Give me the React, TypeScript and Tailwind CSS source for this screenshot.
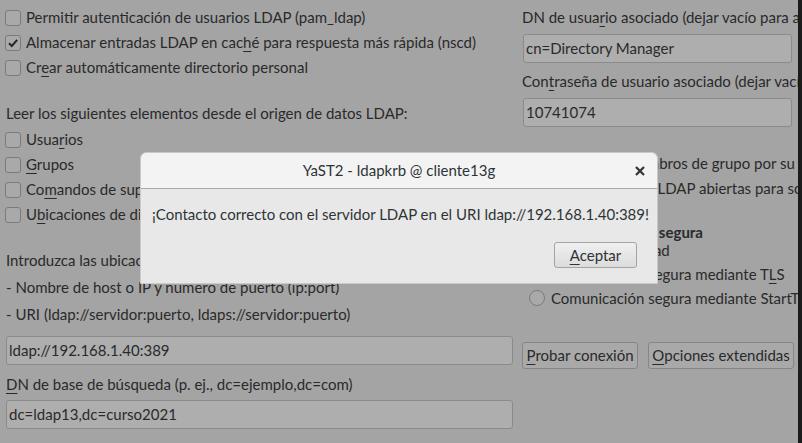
import React from 'react';

const U: React.FC<{ children: React.ReactNode }> = ({ children }) => (
  <span className="underline decoration-1 underline-offset-[3px]">{children}</span>
);

const CheckBox: React.FC<{ checked?: boolean }> = ({ checked }) => (
  <span className="w-[16px] h-[16px] shrink-0 rounded-[3px] border border-[#7b7b7b] bg-[#a9a9a9] flex items-center justify-center">
    {checked && (
      <svg width="12" height="12" viewBox="0 0 12 12">
        <path d="M2 6.2 L4.8 9 L10.2 2.8" fill="none" stroke="#262626" strokeWidth="2" />
      </svg>
    )}
  </span>
);

const Radio = () => (
  <span className="w-[16px] h-[16px] shrink-0 rounded-full border border-[#7b7b7b] bg-[#a9a9a9]" />
);

const CheckRow: React.FC<{ checked?: boolean; children: React.ReactNode; className?: string }> = ({
  checked,
  children,
  className = '',
}) => (
  <div className={`h-[25px] flex items-center gap-[5px] whitespace-nowrap ${className}`}>
    <CheckBox checked={checked} />
    <span>{children}</span>
  </div>
);

const Field: React.FC<{ value: string; className?: string }> = ({ value, className = '' }) => (
  <div
    className={`h-[29px] rounded-[3px] border border-[#8b8b8b] bg-[#aeaeae] flex items-center px-[2px] whitespace-nowrap ${className}`}
  >
    {value}
  </div>
);

const GtkButton: React.FC<{ children: React.ReactNode; className?: string }> = ({ children, className = '' }) => (
  <div
    className={`h-[27px] rounded-[3px] border border-[#868686] bg-[#a9a9a9] flex items-center justify-center px-[4px] whitespace-nowrap ${className}`}
  >
    {children}
  </div>
);

export default function App() {
  return (
    <div className="relative w-[802px] h-[443px] overflow-hidden bg-[#a4a4a4] flex text-[15px] leading-none text-[#2a2a2a] font-['Lato','Noto_Sans',sans-serif]">
      {/* columna izquierda */}
      <div className="w-[522px] shrink-0 pl-[5px] pt-[5px]">
        <CheckRow>Permitir autenticación de usuarios LDAP (pam_ldap)</CheckRow>
        <CheckRow checked>
          Almacenar entradas LDAP en cac<U>h</U>é para respuesta más rápida (nscd)
        </CheckRow>
        <CheckRow>
          Cr<U>e</U>ar automáticamente directorio personal
        </CheckRow>

        <div className="h-[25px] mt-[21px] flex items-center pl-[1px]">
          Leer los siguientes elementos desde el origen de datos LDAP:
        </div>
        <CheckRow className="mt-[1px]">
          Usua<U>r</U>ios
        </CheckRow>
        <CheckRow>
          <U>G</U>rupos
        </CheckRow>
        <CheckRow>
          Co<U>m</U>andos de superusuario (sudo)
        </CheckRow>
        <CheckRow>
          U<U>b</U>icaciones de discos montados automáticamente
        </CheckRow>

        <div className="h-[25px] mt-[21px] flex items-center pl-[1px]">
          Introduzca las ubicaciones del servidor LDAP:
        </div>
        <div className="h-[25px] mt-[2px] flex items-center pl-[1px]">
          - Nombre de host o IP y número de puerto (ip:port)
        </div>
        <div className="h-[25px] mt-[2px] flex items-center pl-[1px]">
          - URI (ldap://servidor:puerto, ldaps://servidor:puerto)
        </div>
        <Field value="ldap://192.168.1.40:389" className="mt-[9px] ml-[1px] w-[507px] h-[28px]" />
        <div className="h-[25px] mt-[7px] flex items-center pl-[1px]">
          <U>D</U>N de base de búsqueda (p. ej., dc=ejemplo,dc=com)
        </div>
        <Field value="dc=ldap13,dc=curso2021" className="mt-[3px] ml-[1px] w-[507px]" />
      </div>

      {/* columna derecha */}
      <div className="flex-1 min-w-0 overflow-hidden pt-[5px] whitespace-nowrap">
        <div className="h-[25px] flex items-center">
          DN de usua<U>r</U>io asociado (dejar vacío para acceso anónimo)
        </div>
        <Field value="cn=Directory Manager" className="mt-[4px] ml-[1px] w-[269px]" />
        <div className="h-[25px] mt-[6px] flex items-center">
          Con<U>t</U>raseña de usuario asociado (dejar vacío si no hay)
        </div>
        <Field value="10741074" className="mt-[4px] ml-[1px] w-[269px]" />

        <CheckRow className="mt-[24px] pl-[13px]">Consultar miembros de grupo por su nombre distintivo</CheckRow>
        <CheckRow className="pl-[3px]">Usar conexiones LDAP abiertas para solicitudes</CheckRow>

        <div className="h-[18px] mt-[22px] flex items-center font-bold">Opción de conexión segura</div>
        <div className="h-[24px] mt-[-3px] flex items-center gap-[6px] pl-[7px]">
          <Radio />
          <span>No usar seguridad</span>
        </div>
        <div className="h-[24px] flex items-center gap-[6px] pl-[7px]">
          <Radio />
          <span>
            Comunicación segura mediante T<U>L</U>S
          </span>
        </div>
        <div className="h-[24px] flex items-center gap-[6px] pl-[7px]">
          <Radio />
          <span>Comunicación segura mediante StartTLS</span>
        </div>

        <div className="mt-[32px] flex gap-[10px]">
          <GtkButton className="w-[116px]">
            <U>P</U>robar conexión
          </GtkButton>
          <GtkButton className="w-[146px]">
            <U>O</U>pciones extendidas
          </GtkButton>
        </div>
      </div>

      {/* borde de ventana */}
      <div className="w-[4px] shrink-0 bg-[#1b1b1b]" />

      {/* diálogo */}
      <div className="absolute left-[140px] top-[152px] w-[518px] h-[132px] rounded-t-[6px] border border-[#c9c9c9] overflow-hidden flex flex-col text-[#2e3436]">
        <div className="relative h-[36px] shrink-0 bg-[#f3f3f3] border-b border-[#a9a9a9] flex items-center justify-center">
          <span>YaST2 - ldapkrb @ cliente13g</span>
          <svg className="absolute right-[12px] top-[13px]" width="10" height="10" viewBox="0 0 10 10">
            <path d="M1 1 L9 9 M9 1 L1 9" stroke="#2e3436" strokeWidth="2.2" />
          </svg>
        </div>
        <div className="flex-1 bg-[#e8e8e8] flex flex-col pl-[11px] pr-[20px]">
          <div className="h-[24px] mt-[13px] flex items-center whitespace-nowrap">
            ¡Contacto correcto con el servidor LDAP en el URI ldap://192.168.1.40:389!
          </div>
          <div className="mt-[16px] self-end h-[26px] w-[83px] rounded-[3px] border border-[#a3a3a3] bg-gradient-to-b from-[#f0f0f0] to-[#dcdcdc] flex items-center justify-center">
            <span>
              <U>A</U>ceptar
            </span>
          </div>
        </div>
      </div>
    </div>
  );
}
